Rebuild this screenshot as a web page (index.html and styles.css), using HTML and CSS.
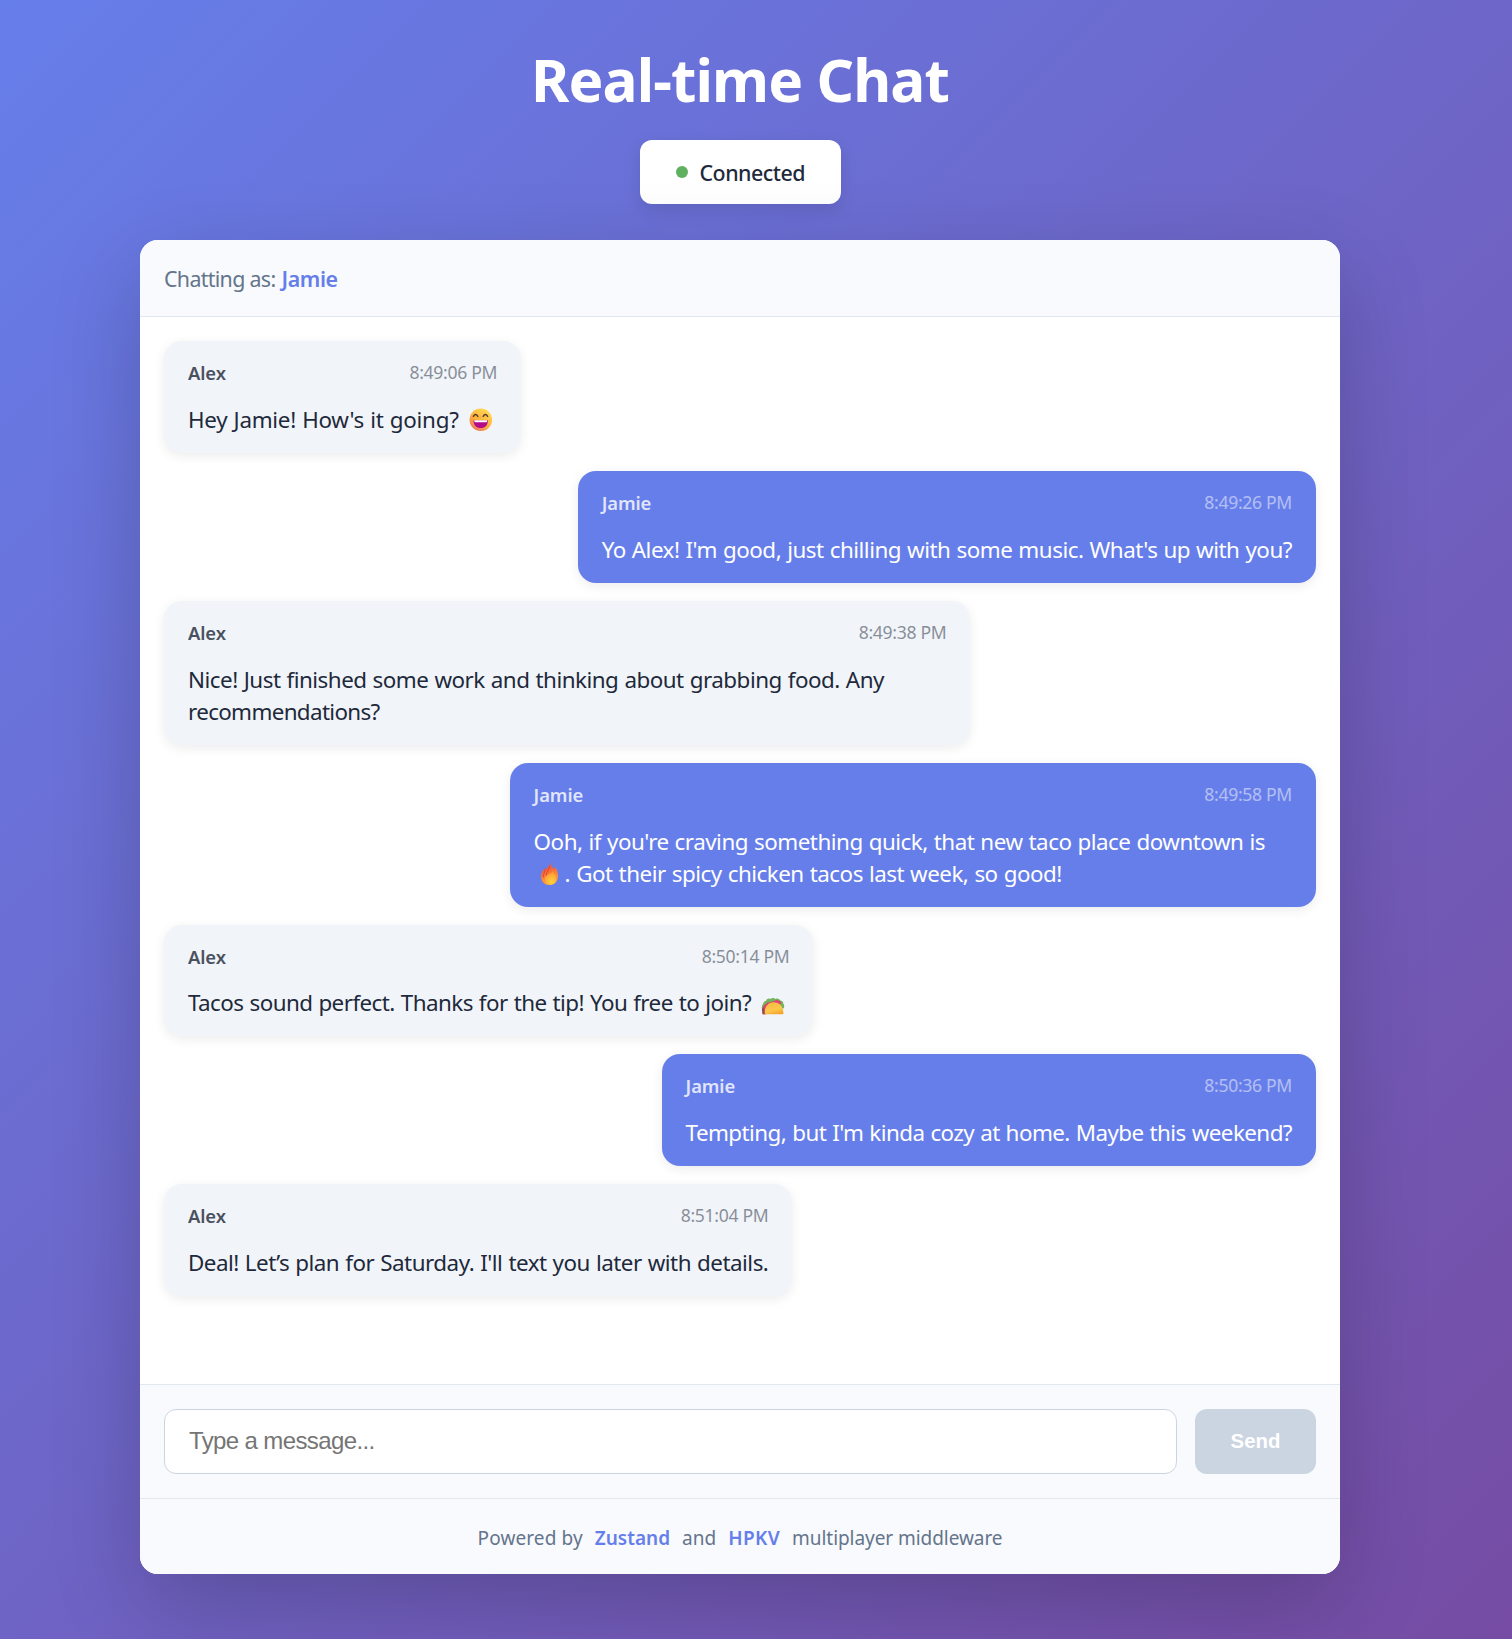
FILE: index.html
```html
<!DOCTYPE html>
<html lang="en">
<head>
<meta charset="utf-8">
<title>Real-time Chat</title>
<link rel="stylesheet" href="styles.css">
</head>
<body>
<div class="page">
  <h1 class="title">Real-time Chat</h1>
  <div class="status"><span class="status-dot"></span><span class="status-text">Connected</span></div>

  <main class="card">
    <header class="card-header"><span class="label">Chatting as:</span><strong class="user">Jamie</strong></header>

    <section class="messages">
      <article class="bubble theirs m-hey">
        <div class="meta"><span class="name">Alex</span><time class="time">8:49:06 PM</time></div>
        <p class="text">Hey Jamie! How's it going? <svg class="emoji" viewBox="0 0 31 24" role="img" aria-label="grinning face">
          <defs>
            <linearGradient id="face" x1="0.8" y1="0.05" x2="0.2" y2="1"><stop offset="0" stop-color="#ffdc54"/><stop offset="0.55" stop-color="#fdb03a"/><stop offset="1" stop-color="#ee6f62"/></linearGradient>
          </defs>
          <circle cx="15.8" cy="11.8" r="11.3" fill="url(#face)"/>
          <path d="M8.4 8.3q2.1-3.5 4.4 0M18.2 8.3q2.1-3.5 4.4 0" fill="none" stroke="#5a3437" stroke-width="1.5" stroke-linecap="round"/>
          <path d="M8.6 12.2h14.2c.3 5-2.9 7.8-7.1 7.8s-7.4-2.8-7.1-7.8z" fill="#b5098c"/>
          <path d="M9.3 12.2h12.8v.8q0 1.2-1.2 1.2H10.500q-1.200 0-1.200-1.200z" fill="#fff"/>
        </svg></p>
      </article>

      <article class="bubble mine m-yo">
        <div class="meta"><span class="name">Jamie</span><time class="time">8:49:26 PM</time></div>
        <p class="text">Yo Alex! I'm good, just chilling with some music. What's up with you?</p>
      </article>

      <article class="bubble theirs m-nice">
        <div class="meta"><span class="name">Alex</span><time class="time">8:49:38 PM</time></div>
        <p class="text">Nice! Just finished some work and thinking about grabbing food. Any <span class="tight">recommendations?</span></p>
      </article>

      <article class="bubble mine m-ooh">
        <div class="meta"><span class="name">Jamie</span><time class="time">8:49:58 PM</time></div>
        <p class="text">Ooh, if you're craving something quick, that new taco place downtown is <svg class="emoji" viewBox="0 0 31 24" role="img" aria-label="fire">
          <defs>
            <linearGradient id="flame" x1="0.3" y1="0" x2="0.6" y2="1"><stop offset="0" stop-color="#ee4438"/><stop offset="0.5" stop-color="#fb7a35"/><stop offset="1" stop-color="#ffae35"/></linearGradient>
            <radialGradient id="core" cx="0.6" cy="0.8" r="0.8"><stop offset="0" stop-color="#ffd43b"/><stop offset="1" stop-color="#ff9438"/></radialGradient>
          </defs>
          <path d="M16.400.600c.3 3 2 4.600 3.500 6.700 1.100-.6 1.300-1.700 1.500-2.500 1.500 2.500 2.800 6 2.600 9.500-.3 5.400-3.500 8.800-8.300 8.800-5 0-8.700-3.200-8.700-8.500 0-4 2-6.500 4.100-8.400l.5 1.400c2-1.700 4.400-3.800 4.800-7z" fill="url(#flame)"/>
          <path d="M11.200 7.300c.6 2.300-2.200 4.200-2 7.700M15.400 4.500c.3 4-3.200 5-3.400 8.500" fill="none" stroke="#d8403f" stroke-width=".9" stroke-linecap="round"/>
          <path d="M19 9c.4 3 3.400 4 3.200 7.600-.2 3.900-2.700 6-6 6-3.700 0-5.700-2.400-5.400-5.600.4-3.900 5.700-4.400 8.200-8z" fill="url(#core)"/>
        </svg>. Got their spicy chicken tacos last week, so good!</p>
      </article>

      <article class="bubble theirs m-tacos">
        <div class="meta"><span class="name">Alex</span><time class="time">8:50:14 PM</time></div>
        <p class="text">Tacos sound perfect. Thanks for the tip! You free to join? <svg class="emoji" viewBox="0 0 31 24" role="img" aria-label="taco">
          <defs>
            <linearGradient id="shell" x1="0.3" y1="0" x2="0.7" y2="1"><stop offset="0" stop-color="#f6bb43"/><stop offset="0.6" stop-color="#fcc84b"/><stop offset="1" stop-color="#f3a32c"/></linearGradient>
          </defs>
          <path d="M5 18c-.6-2 .2-4.300 1.400-5.700.2-1.600 1.500-2.200 2.600-2.200.7-2.300 2.800-2.900 4.300-2.200 1.700-1.400 4-1.200 5.200 0 2.400-.9 4.300.4 4.700 1.700 2.300.2 3.200 1.800 3 3 1.400 1.400 1.300 3.500.3 4.900z" fill="#72b35c"/>
          <path d="M5.500 23.300c-.7-4-.2-7.500 2.500-9.500l2.600-2.300 3.400-.5 3.900-1.300c2.500-1 5.500-.4 6.200 2.400l-2 3.500-13 7.700z" fill="#e43d6e"/>
          <path d="M4.900 18l1.300-2 2.400 7.300H5.900z" fill="#8b4a56"/>
          <path d="M7.800 23.300c-.8-7.300 3.300-12 9-12s9.900 4.500 9.600 11.100q0 .9-1 .9z" fill="url(#shell)"/>
        </svg></p>
      </article>

      <article class="bubble mine m-tempting">
        <div class="meta"><span class="name">Jamie</span><time class="time">8:50:36 PM</time></div>
        <p class="text">Tempting, but I'm kinda cozy at home. Maybe this weekend?</p>
      </article>

      <article class="bubble theirs m-deal">
        <div class="meta"><span class="name">Alex</span><time class="time">8:51:04 PM</time></div>
        <p class="text">Deal! Let’s plan for Saturday. I'll text you later with details.</p>
      </article>
    </section>

    <form class="composer">
      <input class="field" type="text" placeholder="Type a message...">
      <button class="send" type="button" disabled>Send</button>
    </form>

    <footer class="card-footer">
      <span class="powered">Powered by</span><a class="link">Zustand</a><span>and</span><a class="link hpkv">HPKV</a><span class="tail">multiplayer middleware</span>
    </footer>
  </main>
</div>
</body>
</html>
```
FILE: styles.css
```css
* { box-sizing: border-box; }

body {
  margin: 0;
  min-height: 1639px;
  background: linear-gradient(135deg, #667eea 0%, #764ba2 100%) 0 0 / 100% 1700px no-repeat;
  font-family: "Noto Sans", "Open Sans", sans-serif;
  color: #1e293b;
}

.page {
  display: flex;
  flex-direction: column;
  align-items: center;
  width: 1480px;
  padding-top: 39px;
}

.title {
  margin: 0 0 21px;
  font-size: 58.5px;
  line-height: 80px;
  font-weight: 700;
  letter-spacing: -0.9px;
  color: #fff;
}

.status {
  display: flex;
  align-items: center;
  gap: 12px;
  width: 201px;
  height: 64px;
  padding: 0 36px;
  background: #fff;
  border-radius: 12px;
  box-shadow: 0 6px 18px rgba(0, 0, 0, 0.1);
}

.status-dot {
  flex: none;
  width: 12px;
  height: 12px;
  border-radius: 50%;
  background: #5fb05f;
}

.status-text {
  padding-top: 1px;
  font-size: 21.4px;
  font-weight: 500;
  letter-spacing: -0.5px;
}

.card {
  position: relative;
  width: 1200px;
  margin-top: 36px;
  overflow: hidden;
  background: #fff;
  border-radius: 18px;
  box-shadow: 0 30px 90px rgba(0, 0, 0, 0.2);
}

.card-header {
  display: flex;
  align-items: center;
  gap: 6px;
  height: 77px;
  background: #f8fafd;
  border-bottom: 1px solid #e2e8f0;
  padding: 0 24px;
  font-size: 21.4px;
  color: #64748b;
}

.label { letter-spacing: -0.68px; }

.user {
  font-weight: 600;
  letter-spacing: -0.4px;
  color: #667eea;
}

.messages {
  display: flex;
  flex-direction: column;
  gap: 18px;
  height: 1067px;
  padding: 24px;
}

.bubble {
  max-width: 70%;
  padding: 18px 24px 17px;
  border-radius: 18px;
  box-shadow: 0 3px 12px rgba(0, 0, 0, 0.08);
}

.theirs {
  align-self: flex-start;
  background: #f1f5f9;
}

.mine {
  align-self: flex-end;
  background: #667eea;
  color: #fff;
}

.meta {
  display: flex;
  justify-content: space-between;
  height: 28px;
  margin-bottom: 16.9px;
  line-height: 28px;
}

.name {
  font-size: 18.4px;
  font-weight: 600;
  letter-spacing: -0.1px;
  opacity: 0.8;
}

.time {
  font-size: 17.6px;
  line-height: 27px;
  letter-spacing: -0.33px;
  opacity: 0.5;
}

.text {
  margin: 0;
  font-size: 22.4px;
  line-height: 32px;
  letter-spacing: -0.5px;
  word-spacing: 0.7px;
}

.m-hey .text { letter-spacing: -0.28px; }
.m-yo .text { letter-spacing: -0.49px; }
.m-tempting .text { letter-spacing: -0.56px; }
.m-tacos .text { letter-spacing: -0.55px; }
.text .tight { letter-spacing: -0.65px; }

.emoji {
  width: 31px;
  height: 24px;
  vertical-align: -4px;
}

.m-hey .emoji,
.m-tacos .emoji {
  margin-right: 1.3px;
}

.composer {
  display: flex;
  gap: 18px;
  padding: 24px;
  background: #f8fafd;
  border-top: 1px solid #e2e8f0;
}

.field {
  flex: 1;
  min-width: 0;
  height: 65px;
  padding: 0 24px 2px;
  background: #fff;
  border: 1px solid #cbd5e1;
  border-radius: 12px;
  font: 24px "Liberation Sans", Arial, sans-serif;
  letter-spacing: -0.62px;
}

.field::placeholder { color: #757575; }

.send {
  width: 121px;
  height: 65px;
  padding: 0;
  background: #cbd5e1;
  border: 0;
  border-radius: 12px;
  font: 700 20.4px "Liberation Sans", Arial, sans-serif;
  color: #fff;
}

.card-footer {
  display: flex;
  align-items: center;
  justify-content: center;
  gap: 12px;
  height: 76px;
  padding-top: 3px;
  background: #f8fafd;
  border-top: 1px solid #e2e8f0;
  font-size: 19px;
  color: #64748b;
}

.powered { letter-spacing: 0.12px; }
.tail { letter-spacing: -0.06px; }

.link {
  font-weight: 600;
  color: #667eea;
}

.hpkv { letter-spacing: 0.4px; }
```
